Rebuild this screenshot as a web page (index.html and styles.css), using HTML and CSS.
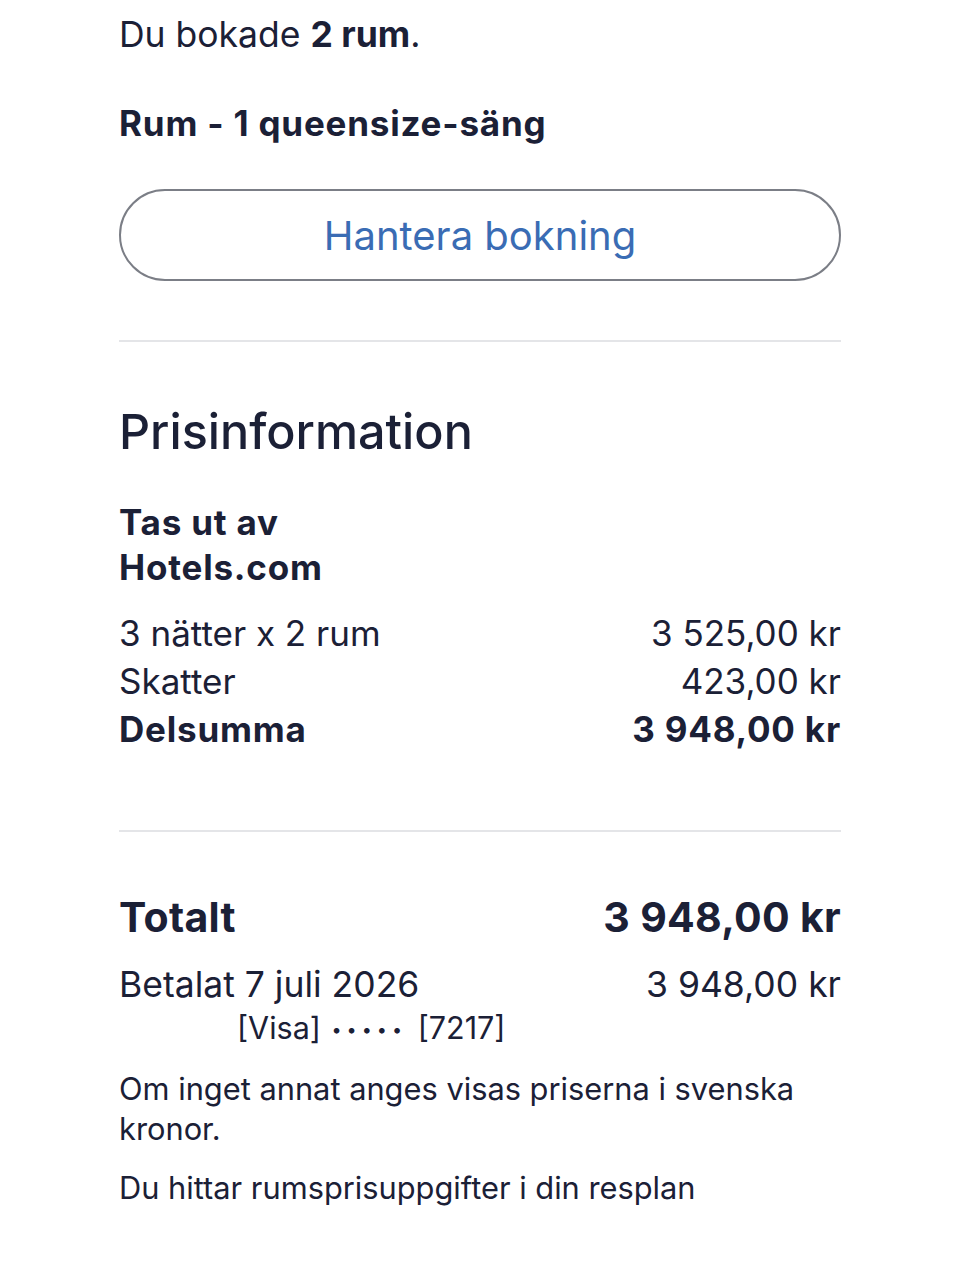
FILE: index.html
```html
<!DOCTYPE html>
<html lang="sv">
<head>
  <meta charset="UTF-8" />
  <meta name="viewport" content="width=device-width, initial-scale=1.0"/>
  <title>Bokning</title>
  <link rel="stylesheet" href="styles.css">
</head>
<body>

  <div class="page">

    <!-- Rum -->
    <p class="intro">Du bokade <strong>2 rum</strong>.</p>
    <p class="room-type">Rum - 1 queensize-säng</p>
    <a class="btn" href="#">Hantera bokning</a>

    <hr class="divider divider-top">

    <!-- Pris -->
    <h2 class="heading">Prisinformation</h2>
    <p class="charged">Tas ut av<br>Hotels.com</p>

    <div class="rows">
      <div class="row"><span>3 nätter x 2 rum</span><span>3&nbsp;525,00 kr</span></div>
      <div class="row"><span>Skatter</span><span>423,00 kr</span></div>
      <div class="row bold"><span>Delsumma</span><span>3&nbsp;948,00 kr</span></div>
    </div>

    <hr class="divider divider-mid">

    <div class="row total"><span>Totalt</span><span>3&nbsp;948,00 kr</span></div>
    <div class="row paid"><span>Betalat 7 juli 2026</span><span>3&nbsp;948,00 kr</span></div>
    <p class="card">[Visa] <span class="dots">•••••</span> [7217]</p>

    <p class="note">Om inget annat anges visas priserna i svenska kronor.</p>
    <p class="note">Du hittar rumsprisuppgifter i din resplan</p>

  </div>

</body>
</html>
```

FILE: styles.css
```css
body {
  margin: 0;
  font-family: Inter, "Noto Sans", sans-serif;
  background-color: #ffffff;
  color: #1b2036;
}

.page {
  width: 722px;
  margin: 0 auto;
  padding-top: 13px;
}

p {
  margin: 0;
}

.intro {
  font-size: 35.5px;
  line-height: 44px;
}

.intro strong {
  font-weight: 700;
}

.room-type {
  margin-top: 44px;
  font-size: 35px;
  line-height: 44px;
  font-weight: 700;
  letter-spacing: 0.8px;
}

.btn {
  display: flex;
  justify-content: center;
  align-items: center;
  box-sizing: border-box;
  height: 92px;
  margin-top: 44px;
  border: 2px solid #7b7e86;
  border-radius: 46px;
  color: #3a6cb4;
  font-size: 40px;
  text-decoration: none;
}

.divider {
  height: 2px;
  margin: 0;
  border: none;
  background-color: #e4e5e8;
}

.divider-top {
  margin-top: 59px;
}

.heading {
  margin: 60px 0 0;
  font-size: 48.5px;
  line-height: 60px;
  font-weight: 500;
}

.charged {
  margin-top: 38px;
  font-size: 35px;
  line-height: 45px;
  font-weight: 700;
  letter-spacing: 0.8px;
}

.rows {
  margin-top: 19px;
}

.row {
  display: flex;
  justify-content: space-between;
  font-size: 35px;
  line-height: 48px;
}

.row.bold {
  font-weight: 700;
  letter-spacing: 0.8px;
}

.divider-mid {
  margin-top: 77px;
}

.total {
  margin-top: 60px;
  font-size: 41px;
  line-height: 50px;
  font-weight: 700;
  letter-spacing: 0.3px;
}

.paid {
  margin-top: 20px;
  font-size: 35.5px;
  line-height: 46px;
}

.card {
  padding-left: 118px;
  font-size: 30.5px;
  line-height: 40px;
}

.dots {
  margin: 0 2px;
  font-size: 18px;
  letter-spacing: 5px;
  vertical-align: 3px;
}

.note {
  margin-top: 19px;
  font-size: 30.8px;
  line-height: 40px;
}
```
